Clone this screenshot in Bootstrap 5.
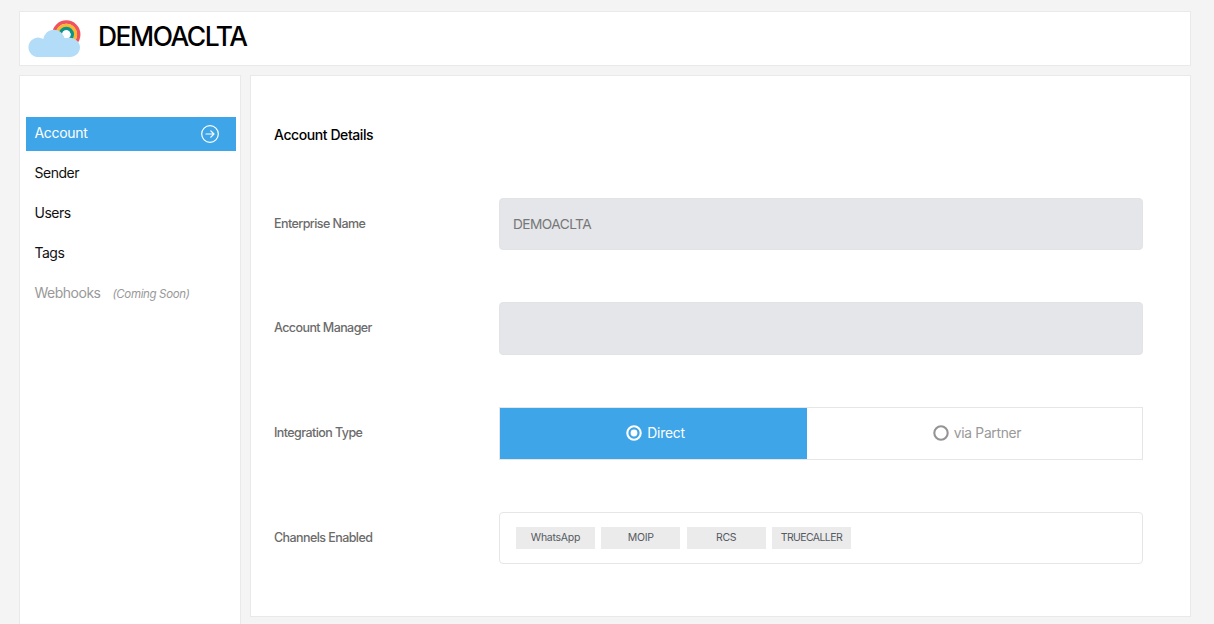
<!DOCTYPE html>
<html lang="en">
<head>
<meta charset="utf-8">
<meta name="viewport" content="width=device-width, initial-scale=1">
<title>DEMOACLTA</title>
<link href="https://cdn.jsdelivr.net/npm/bootstrap@5.3.0/dist/css/bootstrap.min.css" rel="stylesheet">
<style>
html, body { height: 100%; overflow: hidden; }
body { background: #f4f4f4; font-family: Inter, "Open Sans", sans-serif; color: #000; padding: 11px 23px 0 19px; }
.panel { background: #fff; border: 1px solid #e9e9e9; }
.topbar { height: 55px; padding-left: 8px; }
.topbar h1 { font-size: 26.4px; font-weight: 500; letter-spacing: -1.45px; line-height: 32px; margin: -5px 0 0 16px; }
.columns { gap: 9px; margin-top: 9px; }
.side { width: 222px; height: 549px; padding: 41px 4px 0 6px; border-bottom: 0; }
.side .nav-link { height: 34px; margin-bottom: 6px; padding: 0 17px 0 8.5px; color: #111; font-size: 14px; letter-spacing: -.5px; line-height: 32px; border-radius: 0; }
.side .nav-link.active { background: #3ea5e9; color: #fff; letter-spacing: -.3px; padding-bottom: 3px; }
.side .nav-link.active svg { margin-top: 3px; }
.side .nav-link.disabled { color: #999; }
.soon { font-size: 11.5px; letter-spacing: -.35px; margin-left: 12px; }
.main-panel { height: 542px; padding: 0 47px 0 23px; }
.main-panel h2 { font-size: 14px; font-weight: 500; line-height: 20px; letter-spacing: -.42px; margin: 49px 0 53px; }
.field-row { height: 52px; margin-bottom: 52.7px; }
.field-row label { width: 225px; font-size: 12.5px; font-weight: 500; color: #6b6b6b; letter-spacing: -.57px; }
.box { height: 52.5px; border: 1px solid #e6e6e6; border-radius: 4px; }
.box.form-control { background: #e4e6ea; border-color: #e1e3e7; color: #777; font-size: 13.7px; letter-spacing: -.55px; padding: 0 13px; }
.toggle { border-radius: 0; font-size: 13.8px; letter-spacing: -.2px; }
.toggle > div { gap: 5px; }
.toggle span { margin-top: -1px; }
.on { width: 307px; background: #3ea5e9; color: #fff; padding-left: 4px; }
.off { color: #999; letter-spacing: -.3px; padding-left: 5px; }
.chips { gap: 6.3px; }
.chip { width: 79px; height: 22px; background: #ebebec; color: #555a61; font-size: 10.5px; letter-spacing: -.25px; }
.chip-tight { letter-spacing: -.6px; }
</style>
</head>
<body>
<header class="panel topbar d-flex align-items-center">
  <svg width="54" height="38" viewBox="0.5 0.5 54 38">
    <g fill="none" stroke-width="3.5"><circle cx="38.8" cy="15" r="12.4" stroke="#f05360"/><circle cx="38.8" cy="15" r="9.1" stroke="#fcb731"/><circle cx="38.8" cy="15" r="6" stroke="#0b9487"/></g>
    <circle cx="38.8" cy="15" r="4.3" fill="#fff"/>
    <path d="M10 37.5A9.7 9.7 0 1 1 15.8 19.6C17 14 21 10.3 26.3 10.3C31.5 10.3 35.6 13.5 37 18.8C38.6 18.3 40.4 18.1 42.2 18.2C48 18.4 52.5 22.5 52.5 27.8C52.5 33.3 48 37.5 42.5 37.5Z" fill="#b3dcf8"/>
  </svg>
  <h1>DEMOACLTA</h1>
</header>
<div class="columns d-flex">
  <nav class="panel side nav flex-column flex-nowrap flex-shrink-0">
    <a class="nav-link active d-flex align-items-center justify-content-between" href="#"><span>Account</span>
      <svg class="flex-shrink-0" width="18" height="18" viewBox="0 0 18 18" fill="none" stroke="#fff" stroke-width="1.2" stroke-linecap="round" stroke-linejoin="round"><circle cx="9" cy="9" r="8.3"/><path d="M5 9H13M9.8 5.8L13 9L9.8 12.2"/></svg></a>
    <a class="nav-link" href="#">Sender</a>
    <a class="nav-link" href="#">Users</a>
    <a class="nav-link" href="#">Tags</a>
    <a class="nav-link disabled"><span>Webhooks</span><em class="soon">(Coming Soon)</em></a>
  </nav>
  <main class="panel main-panel flex-grow-1">
    <h2>Account Details</h2>
    <div class="field-row d-flex align-items-center"><label for="en">Enterprise Name</label><input id="en" class="box form-control flex-fill w-auto" value="DEMOACLTA" disabled></div>
    <div class="field-row d-flex align-items-center"><label for="am">Account Manager</label><input id="am" class="box form-control flex-fill w-auto" disabled></div>
    <div class="field-row d-flex align-items-center"><label>Integration Type</label>
      <div class="box toggle flex-fill d-flex">
        <div class="on d-flex align-items-center justify-content-center"><svg width="16" height="16" viewBox="0 0 16 16"><circle cx="8" cy="8" r="6.7" fill="none" stroke="#fff" stroke-width="2.1"/><circle cx="8" cy="8" r="3.4" fill="#fff"/></svg><span>Direct</span></div>
        <div class="off flex-fill d-flex align-items-center justify-content-center"><svg width="16" height="16" viewBox="0 0 16 16"><circle cx="8" cy="8" r="6.7" fill="none" stroke="#949494" stroke-width="2.1"/></svg><span>via Partner</span></div>
      </div></div>
    <div class="field-row d-flex align-items-center mb-0"><label>Channels Enabled</label>
      <div class="box chips flex-fill d-flex align-items-center px-3">
        <span class="chip d-flex align-items-center justify-content-center">WhatsApp</span><span class="chip d-flex align-items-center justify-content-center">MOIP</span><span class="chip d-flex align-items-center justify-content-center">RCS</span><span class="chip chip-tight d-flex align-items-center justify-content-center">TRUECALLER</span>
      </div></div>
  </main>
</div>
<script src="https://cdn.jsdelivr.net/npm/bootstrap@5.3.0/dist/js/bootstrap.bundle.min.js"></script>
</body>
</html>
